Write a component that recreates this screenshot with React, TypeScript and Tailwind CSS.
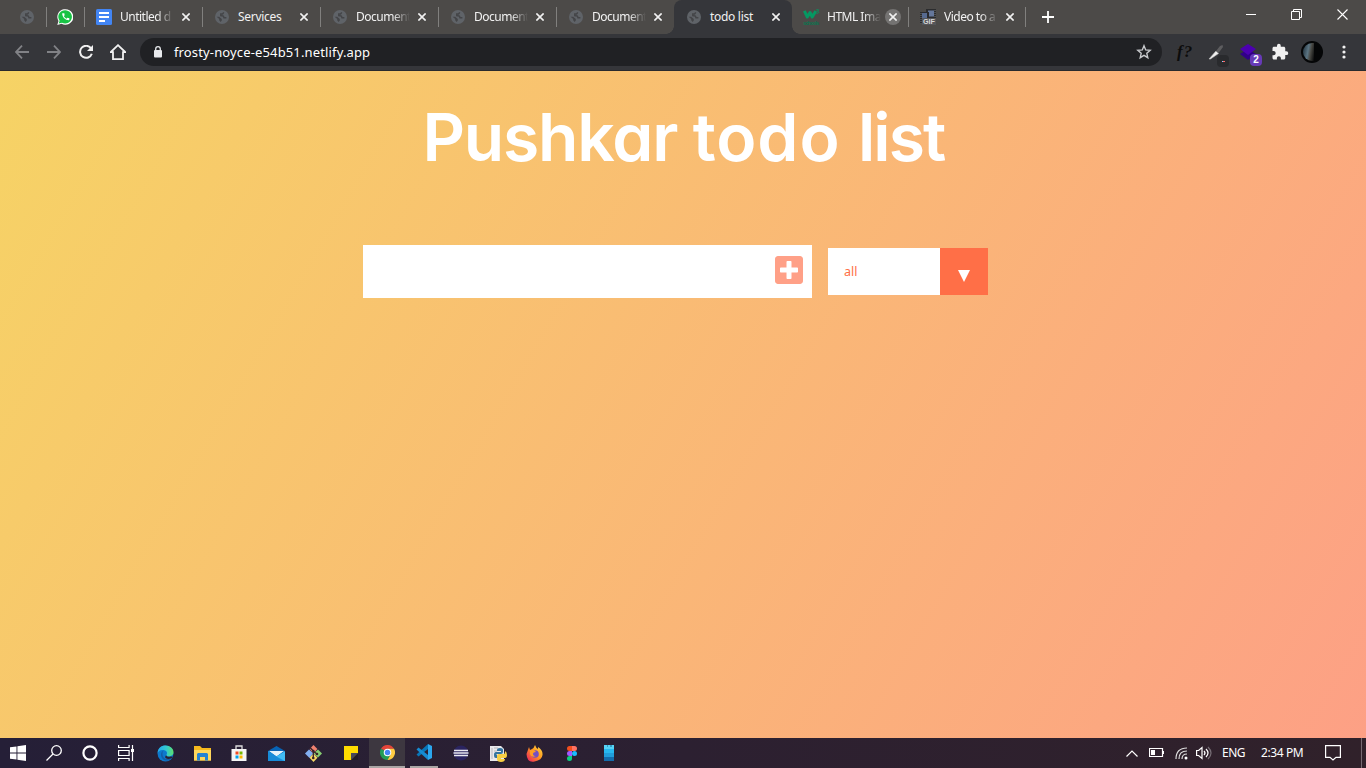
import type { ReactNode } from "react";
import { FaPlusSquare } from "react-icons/fa";
import { MdCall, MdExtension } from "react-icons/md";

function Globe() {
  return (
    <svg width="14" height="14" viewBox="0 0 14 14">
      <circle cx="7" cy="7" r="7" fill="#5f6368" />
      <path d="M8.800 2.400 7.600 3.900H5.800v1.700l2.600.5.600 1.700h2.400" fill="none" stroke="#444548" strokeWidth="1.500" />
      <path d="M1.600 6.800h2.600L6.800 9v1.400L5.600 12 4.200 10.300V9z" fill="#444548" />
    </svg>
  );
}

function Docs() {
  return (
    <svg width="16" height="16" viewBox="0 0 16 16">
      <rect width="16" height="16" rx="1.5" fill="#4285f4" />
      <path d="M3 4h10M3 8h10M3 12h6" stroke="#fff" strokeWidth="2" />
    </svg>
  );
}

function Schools() {
  return (
    <svg width="17" height="17" viewBox="0 0 17 17">
      <path d="M1.300 1.800 4.300 8 7 3.500 9.200 8l3.600-6" fill="none" stroke="#059862" strokeWidth="3" strokeLinejoin="round" />
      <path d="M13.300.8h2.300l-1 1.600c2 .2 1 2.500-1.200 1.800" fill="none" stroke="#059862" strokeWidth=".9" />
      <text x="0" y="16" fontSize="5" fontWeight="700" fontFamily="Liberation Sans, sans-serif" fill="#087850" textLength="16">schools</text>
    </svg>
  );
}

function GifIcon() {
  return (
    <svg width="16" height="16" viewBox="0 0 16 16">
      <rect x="6" y="0" width="10" height="9" fill="#2b2c2e" />
      <rect x="8" y="1.5" width="6" height="6" fill="#65779b" />
      <rect x="0" y="3" width="9" height="12" fill="#292a2d" />
      <rect x="2" y="4" width="5" height="5" fill="#566a90" />
      <path d="M1 4v11M15 1v8" stroke="#777" strokeDasharray="1 1" />
      <rect x="2" y="9" width="14" height="7" fill="#55565a" />
      <text x="3" y="15" fontSize="6.500" fontWeight="700" fontFamily="Liberation Sans, sans-serif" fill="#d8d8d8" textLength="12" lengthAdjust="spacingAndGlyphs">GIF</text>
    </svg>
  );
}

function WhatsApp() {
  return (
    <span className="relative flex size-4">
      <svg width="16" height="16" viewBox="0 0 16 16">
        <path d="M.3 15.900 1.500 12A8 7.800 0 1 1 4.500 14.800z" fill="#fff" />
        <path d="M1.700 14.500 2.600 11.700A6.800 6.600 0 1 1 5 13.700z" fill="#17c344" />
      </svg>
      <MdCall className="absolute left-[3.5px] top-[3px] size-[9.5px] text-white" />
    </span>
  );
}

function Cross() {
  return (
    <svg width="8" height="8" viewBox="0 0 8 8">
      <path d="m.4.4 7.200 7.200m0-7.200L.4 7.600" stroke="#f1f1f1" strokeWidth="1.6" />
    </svg>
  );
}

type TabProps = { title: string; icon: ReactNode; active?: boolean; marked?: boolean; line?: boolean; faded?: boolean; narrow?: boolean };

function Tab({ title, icon, active, marked, line = true, faded = true, narrow }: TabProps) {
  return (
    <div className={`relative flex h-[34px] shrink-0 items-center ${narrow ? "w-[117px]" : "w-[118px]"} ${active ? "rounded-t-lg bg-[#35363a]" : ""}`}>
      <span className={`flex w-[18px] items-center justify-center ${active ? "ml-[11px]" : "ml-[10px]"}`}>{icon}</span>
      <span className={`ml-[7px] w-[54px] whitespace-nowrap text-[12px] text-[#f1f1f1] ${faded ? "tracking-[-0.5px] [mask-image:linear-gradient(to_right,black_68%,transparent)]" : "tracking-[-0.3px]"}`}>
        {title}
      </span>
      <span className={`ml-1 flex size-4 items-center justify-center rounded-full ${marked ? "bg-[#747372]" : ""}`}>
        <Cross />
      </span>
      {line && <span className="ml-auto h-5 w-px bg-[#81807e]" />}
      {active && (
        <>
          <span className="absolute -left-2 bottom-0 size-2 bg-[radial-gradient(circle_at_0_0,transparent_7.5px,#35363a_8px)]" />
          <span className="absolute -right-2 bottom-0 size-2 bg-[radial-gradient(circle_at_100%_0,transparent_7.5px,#35363a_8px)]" />
        </>
      )}
    </div>
  );
}

function TabStrip() {
  return (
    <div className="flex h-[34px] items-center bg-[#4c4a48]">
      <div className="flex w-[47px] items-center pl-5">
        <Globe />
        <span className="ml-auto h-5 w-px bg-[#81807e]" />
      </div>
      <div className="flex w-[38px] items-center pl-[10px]">
        <WhatsApp />
        <span className="ml-auto h-5 w-px bg-[#81807e]" />
      </div>
      <Tab title="Untitled d" icon={<Docs />} />
      <Tab title="Services" icon={<Globe />} faded={false} />
      <Tab title="Document" icon={<Globe />} />
      <Tab title="Document" icon={<Globe />} />
      <Tab title="Document" icon={<Globe />} line={false} narrow />
      <Tab title="todo list" icon={<Globe />} active line={false} faded={false} />
      <Tab title="HTML Ima" icon={<Schools />} marked narrow />
      <Tab title="Video to a" icon={<GifIcon />} narrow />
      <svg className="ml-[16px]" width="12" height="12" viewBox="0 0 12 12">
        <path d="M6 0v12M0 6h12" stroke="#fff" strokeWidth="1.8" />
      </svg>
      <div className="mb-[6px] ml-auto flex w-[138px] items-center justify-around text-white">
        <svg width="10" height="12"><path d="M0 6.5h10" stroke="currentColor" /></svg>
        <svg width="11" height="11" viewBox="0 0 11 11" fill="none" stroke="currentColor"><path d="M.5 2.5h8v8h-8zM2.5 2.500v-2h8v8h-2" /></svg>
        <svg width="11" height="11" viewBox="0 0 11 11" stroke="currentColor" strokeWidth="1.1"><path d="m.5.5 10 10m0-10-10 10" /></svg>
      </div>
    </div>
  );
}

function Toolbar() {
  return (
    <div className="flex h-[37px] items-center border-b border-[#292a2d] bg-[#35363a]">
      <div className="flex w-[140px] items-center gap-[18px] pl-[15px]">
        <svg width="14" height="14" viewBox="0 0 14 14" fill="none" stroke="#818286" strokeWidth="1.8"><path d="M7 .7.9 7 7 13.300M1 7h13" /></svg>
        <svg width="14" height="14" viewBox="0 0 14 14" fill="none" stroke="#818286" strokeWidth="1.800"><path d="m7 .7 6.100 6.300L7 13.300M13 7H0" /></svg>
        <svg width="14" height="14" viewBox="0 0 14 14" fill="none" stroke="#f1f1f1" strokeWidth="2"><path d="M12.100 3.500A6 6 0 1 0 12.800 8.700" /><path d="M14 0v6H8z" fill="#f1f1f1" stroke="none" /></svg>
        <svg className="-ml-px" width="16" height="16" viewBox="0 0 16 16" fill="none" stroke="#f1f1f1" strokeWidth="1.800"><path d="M.8 8.100h2.200v7h10v-7h2.200L8 1.200z" /></svg>
      </div>
      <div className="flex h-7 w-[1022px] items-center rounded-full bg-[#202124] pl-[14px] pr-[10px]">
        <svg width="8" height="12" viewBox="0 0 8 12"><path d="M1.700 5V3a2.300 2.300 0 0 1 4.600 0v2" fill="none" stroke="#e8eaed" strokeWidth="1.300" /><rect y="4" width="8" height="7.500" rx="1" fill="#e8eaed" /></svg>
        <span className="ml-3 mt-px text-[13px] tracking-[0.14px] text-white">frosty-noyce-e54b51.netlify.app</span>
        <svg className="ml-auto" width="16" height="16" viewBox="0 0 16 16" fill="none" stroke="#c8cacd" strokeWidth="1.400"><path d="m8 1.700 1.700 4.200 4.500.4-3.400 3 1 4.400L8 11.400l-3.800 2.300 1-4.400-3.400-3 4.500-.4z" /></svg>
      </div>
      <span className="-mt-px ml-[15px] w-[18px] whitespace-nowrap font-['Liberation_Serif',serif] text-[17px] font-bold italic leading-none tracking-[1px] text-[#0c0c0c]">f?</span>
      <span className="relative ml-[13px] flex">
        <svg width="16" height="16" viewBox="0 0 16 16"><path d="m1 15 7-8 2.500 2.500L2.500 15z" fill="#f1f1f1" stroke="#bbb" strokeWidth=".6" /><path d="m8 7 4-5 2.500-1L15 3l-4.500 6z" fill="#5d5d5f" /></svg>
        <span className="absolute left-[9px] top-[11px] flex h-3 w-3 items-center justify-center rounded-sm bg-[#292a2d]"><i className="h-px w-px bg-[#8cf]" /><i className="h-px w-[2px] bg-[#f66]" /></span>
      </span>
      <span className="relative ml-[16px] flex">
        <svg width="17" height="17" viewBox="0 0 17 17"><path d="m0 10 8-5 8 5-8 6z" fill="#310087" /><path d="m0 5 8-5 8 5-8 6z" fill="#4c00b0" /></svg>
        <span className="absolute left-[10px] top-[10px] flex size-3 items-center justify-center rounded-sm bg-[#673ab7] font-['Liberation_Sans',sans-serif] text-[10px] font-bold text-white">2</span>
      </span>
      <MdExtension className="ml-[14px] size-[18px] text-[#f1f1f1]" />
      <span className="ml-[12px] size-[22px] rounded-full bg-[#050607] p-[2px]">
        <span className="block h-[18px] w-[11px] rounded-l-full bg-[linear-gradient(100deg,#1d2d38,#5b7482_45%,#4a4a45_65%,#050607)]" />
      </span>
      <svg className="ml-[19px]" width="4" height="14" fill="#f1f1f1"><circle cx="2" cy="2" r="1.600" /><circle cx="2" cy="7" r="1.600" /><circle cx="2" cy="12" r="1.600" /></svg>
    </div>
  );
}

function TodoPage() {
  return (
    <main className="h-[667px] bg-[linear-gradient(120deg,#f6d365_0%,#fda085_100%)]">
      <h1 className="h-[132px] whitespace-nowrap pl-px text-center font-['Inter',sans-serif] text-[66px] font-semibold leading-[132px] text-white [font-feature-settings:'cv11']">
        <span className="tracking-[-1.2px]">Pushkar </span>
        <span className="tracking-[0.9px]">todo </span>
        <span className="tracking-[-1.9px]">list</span>
      </h1>
      <form className="flex items-center pl-[363px] pt-[42px]" onSubmit={(e) => e.preventDefault()}>
        <div className="flex h-[53px] w-[449px] justify-end bg-white pr-[9px] pt-[9px]">
          <button type="button" aria-label="Add" className="flex h-8 w-[28px] items-center justify-center"><FaPlusSquare className="size-8 shrink-0 text-[#ffa087]" /></button>
        </div>
        <div className="ml-4 flex h-[47px] w-[160px] bg-white">
          <span className="flex w-[112px] items-center pl-4 pt-px font-['Noto_Sans',sans-serif] text-[12.500px] text-[#ff6f47]">all</span>
          <span className="flex w-12 items-center justify-center bg-[#ff6f47] pt-[9px]"><svg width="12" height="12" fill="#fff"><path d="M0 0h12L6 12z" /></svg></span>
        </div>
      </form>
    </main>
  );
}

function Cell({ children, className = "" }: { children: ReactNode; className?: string }) {
  return <span className={`flex h-[30px] w-[37px] shrink-0 items-center justify-center ${className}`}>{children}</span>;
}

function Taskbar() {
  return (
    <div className="flex h-[30px] items-center bg-[linear-gradient(90deg,#251f37,#2c2031_50%,#30212a)] text-white">
      <Cell className="!w-[36px]"><svg width="16" height="16" fill="#fff"><path d="M0 2.300 6.500 1.400v6.200H0zM7.400 1.300 16 0v7.600H7.400zM0 8.400h6.500v6.200L0 13.700zM7.400 8.400H16V16l-8.600-1.200z" /></svg></Cell>
      <Cell className="!w-[36px]"><svg width="16" height="16" fill="none" stroke="#fff" strokeWidth="1.300"><circle cx="10.500" cy="5.500" r="4.800" /><path d="M7 9 .5 15.500" /></svg></Cell>
      <Cell className="!w-[36px]"><svg width="16" height="16"><circle cx="8" cy="8" r="6.600" fill="none" stroke="#fff" strokeWidth="2.2" /></svg></Cell>
      <Cell className="!w-[36px]"><svg width="16" height="16" fill="none" stroke="#fff" strokeWidth="1.200"><path d="M.6 0v2.500h10.500V0M.6 5.500h10.500v5H.6zM.6 16v-2.500h10.500V16M14.500 0v16" /><path d="M13 4h3v3h-3z" fill="#fff" stroke="none" /></svg></Cell>
      <Cell className="ml-[3px]">
        <svg width="17" height="17" viewBox="0 0 17 17">
          <defs><linearGradient id="edge"><stop stopColor="#24a9ed" /><stop offset=".55" stopColor="#33c9cf" /><stop offset="1" stopColor="#5ce16d" /></linearGradient></defs>
          <circle cx="8.500" cy="8.500" r="8" fill="#0c78cd" />
          <path d="M.5 8C1 3 4 .5 8.500.5c4.500 0 8 3 8 6.600 0 3-2.300 4.300-4.600 4.300-2 0-3-.7-2.300-1.800C11 7.400 9 5.300 6.500 5 3.500 4.500 1.500 6 .5 8" fill="url(#edge)" />
          <path d="M6.500 5.700C4.600 7 5 14 10 14c2 0 3.600-.6 5-1.300-2.500 4.300-10.500 4-11-3 0-2 1-3.500 2.500-4" fill="#135ba5" />
          <path d="M9 10.300q1 2.200 5 1.300l2 .2-1 1.100q-5 2.400-7-.6z" fill="#2b2031" />
        </svg>
      </Cell>
      <Cell><svg width="17" height="15"><path d="M0 0h6l2 2h9v12.500H0z" fill="#f6b91d" /><path d="M0 4h17v10.500H0z" fill="#ffd75c" /><path d="M3 14.500V8l1-1h9l1 1v6.500h-3V11H6v3.500z" fill="#2583d3" /></svg></Cell>
      <Cell className="-ml-px"><svg width="16" height="16"><path d="M5 4V1h6v3" fill="none" stroke="#ddd" strokeWidth="1.300" /><path d="M.5 4h15v12H.5z" fill="#f5f5f5" /><path d="M4.500 6.500h3v3h-3z" fill="#f24d23" /><path d="M8.500 6.500h3v3h-3z" fill="#78b800" /><path d="M4.500 10.500h3v3h-3z" fill="#00a5ef" /><path d="M8.500 10.500h3v3h-3z" fill="#fdb900" /></svg></Cell>
      <Cell className="ml-px"><svg width="17" height="15"><path d="M0 5 8.500 0 17 5v10H0z" fill="#0763b5" /><path d="M1 5h15L8.500 10.500z" fill="#e4f3fa" /><path d="m0 5 8.500 5.500L17 5v10H0z" fill="#1c9ae2" /><path d="M0 5v10h15z" fill="#168bd8" /><path d="m8.500 10.500 8.500-5V15z" fill="#42bdf4" /></svg></Cell>
      <Cell><svg width="17" height="17"><path d="m8.500 0 3.900 4-3.900 4.500L4.600 4z" fill="#ef8170" /><path d="m4 4.500 4.500 4L4.500 13 0 8.500z" fill="#82aff1" /><path d="m13 4.500 4 4-4 4-4.500-4z" fill="#88cd72" /><path d="m8.500 8.500 4 4.300-4 4.200-4-4.200z" fill="#f6d764" /><path d="M5 2.500 8.300 6v8M8 6l4 3" fill="none" stroke="#392228" strokeWidth="1.300" /><circle cx="8.300" cy="6" r="1.300" fill="#392228" /><circle cx="12" cy="9" r="1.300" fill="#392228" /><circle cx="8.300" cy="13" r="1.300" fill="#392228" /></svg></Cell>
      <Cell><svg width="14" height="14"><path d="M0 0h14v7L7 14H0z" fill="#ffdc00" /><path d="M7 14V7h7z" fill="#46485b" /><path d="M14 7v7H7z" fill="#211d29" /></svg></Cell>
      <Cell className="!w-[36px] border-b-2 border-[#aaa6a5] bg-[#3d3740]">
        <svg width="15" height="15" viewBox="0 0 30 30"><path d="M15 15 2 7.500A15 15 0 0 1 28 7.500H15z" fill="#e34539" /><path d="M2 7.500A15 15 0 0 0 15 30l6.500-11.300L15 15z" fill="#229d57" /><path d="M28 7.500A15 15 0 0 1 15 30l6.500-11.300L15 7.500z" fill="#ffcd42" /><circle cx="15" cy="15" r="7.500" fill="#fff" /><circle cx="15" cy="15" r="5.500" fill="#4386f5" /></svg>
      </Cell>
      <div className="ml-[5px] flex h-[30px] w-7 items-center justify-center border-b-2 border-[#aaa6a5]">
        <svg width="16" height="16"><path d="M12 0v5L2.500 12.500.5 10.500z" fill="#0876b8" /><path d="m.5 5.500 2-2L12 11v5z" fill="#168bd2" /><path d="m12 0 4 2v12l-4 2z" fill="#2ba7ef" /></svg>
      </div>
      <Cell className="ml-[4px]"><svg width="16" height="16"><circle cx="8" cy="8" r="7.500" fill="#2a2460" /><path d="M1 5.500h14M.5 8h15M1 10.500h14" stroke="#e9e8ef" strokeWidth="1.300" /></svg></Cell>
      <Cell><svg width="18" height="17"><path d="M1 1h11l3 3v12H1z" fill="#e9e9ec" /><path d="M3 3v11M5 3h4M5 6h3M5 9h3M5 12h3" stroke="#b7b7bb" /><path d="M6 8h5q2 0 2-2V4q0-2-3-2T7 4v1h4v1H6Q4 6 4 9t2 3h1V9z" fill="#33749e" transform="translate(1 1)" /><path d="M10 9h5q1 0 1-2V6q2 1 2 4t-2 3h-4v1h4q0 3-4 3t-4-3v-3q0-2 2-2" fill="#f7cf43" /></svg></Cell>
      <Cell>
        <svg width="17" height="17"><defs><linearGradient id="fire" x1="1" x2="0" y1="0" y2="1"><stop stopColor="#ffe34b" /><stop offset=".45" stopColor="#ff981e" /><stop offset="1" stopColor="#ec1764" /></linearGradient></defs><path d="M9 0q1 3 3 4V2q5 3 4.500 8T8.500 16.500.5 9L3 2l1 3 2-1q2-1 3-4" fill="url(#fire)" /><circle cx="9" cy="9" r="3.800" fill="#744fc3" /><path d="M4 5h4l2 2q-3 0-3 2t3 2Q5 13 4 9z" fill="#ff9d23" /></svg>
      </Cell>
      <Cell><svg width="10" height="15"><path d="M5 0H2.500a2.500 2.500 0 0 0 0 5H5z" fill="#f24e1e" /><path d="M5 0h2.500a2.500 2.500 0 0 1 0 5H5z" fill="#ff7262" /><path d="M5 5H2.500a2.500 2.500 0 0 0 0 5H5z" fill="#a259ff" /><circle cx="7.500" cy="7.500" r="2.500" fill="#1abcfe" /><path d="M5 10H2.500A2.500 2.500 0 1 0 5 12.500z" fill="#0acf83" /></svg></Cell>
      <Cell><svg width="10" height="16"><path d="M0 0h10v16H0z" fill="#136dac" /><path d="M0 0h10v12H0z" fill="#209edb" /><path d="M0 0h10v8H0z" fill="#27b8ef" /><path d="M0 0h10v4H0z" fill="#56d4f6" /><path d="M3 1h1M6 1h2" stroke="#17648d" /></svg></Cell>
      <div className="ml-auto flex w-[240px] items-center">
        <svg width="12" height="7" fill="none" stroke="#fff" strokeWidth="1.200"><path d="m.5 6.500 5.500-5.500 5.500 5.500" /></svg>
        <svg className="ml-[11px]" width="15" height="10" fill="none" stroke="#fff"><path d="M.5.5h13v8H.5z" strokeWidth="1.200" /><path d="M2 2h4v5H2zM14 3h1v3h-1z" fill="#fff" stroke="none" /></svg>
        <svg className="ml-[11px]" width="13" height="13" fill="none" stroke="#ddd" strokeWidth="1.200"><path d="M1 12Q1 1 12 1M4 12q0-8 8-8M7 12q0-5 5-5" /><circle cx="11" cy="11" r="1.500" fill="#fff" stroke="none" /></svg>
        <svg className="ml-[8px]" width="16" height="14" fill="none" stroke="#fff" strokeWidth="1.200"><path d="M.6 4.500h2L6 1.500v11L2.600 9.500h-2zM8 5q2 2 0 4M10 3q4 4 0 8" /><path d="M12 1q6 6 0 12" stroke="#776e76" /></svg>
        <span className="ml-[10px] w-[39px] text-[12px] tracking-[-0.5px]">ENG</span>
        <span className="w-[64px] whitespace-nowrap text-[12px] tracking-[-0.4px]">2:34 PM</span>
        <svg width="16" height="16" fill="none" stroke="#fff" strokeWidth="1.200"><path d="M.6.600h14.800v11.800H11L8 15l-3-2.600H.6z" /></svg>
        <span className="ml-auto mr-[4px] h-[30px] w-px bg-[#776a72]" />
      </div>
    </div>
  );
}

export default function App() {
  return (
    <div className="flex h-[768px] w-[1366px] flex-col overflow-hidden font-['Noto_Sans',sans-serif]">
      <TabStrip />
      <Toolbar />
      <TodoPage />
      <Taskbar />
    </div>
  );
}
